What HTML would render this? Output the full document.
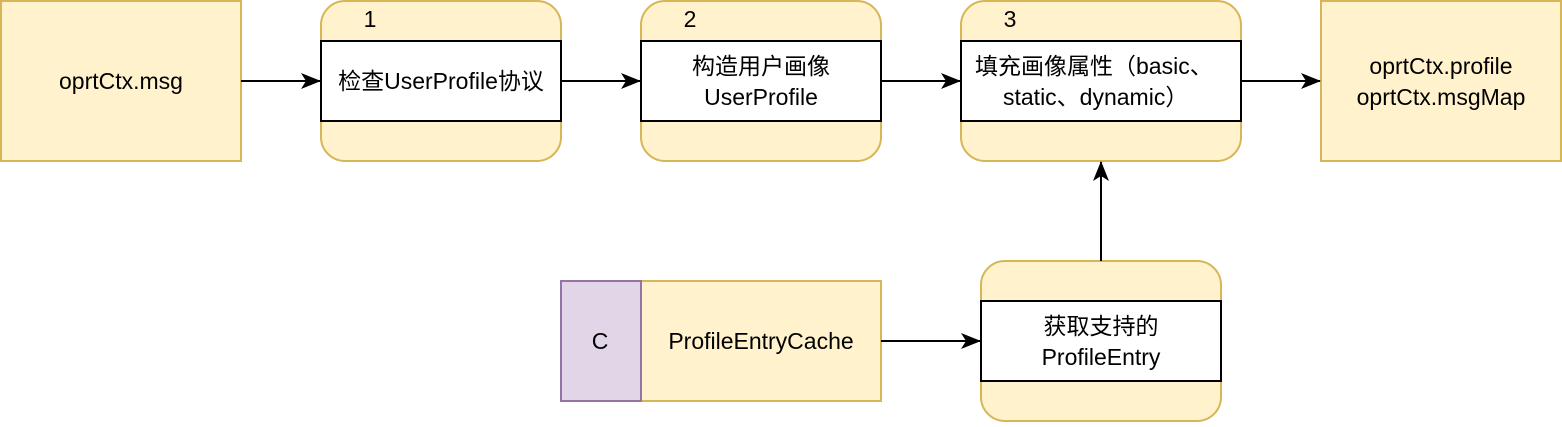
<!DOCTYPE html>
<html><head><style>body{margin:0;background:#fff}svg text{font-family:"Liberation Sans","Noto Sans CJK SC",sans-serif;font-size:23px;fill:#000}</style></head><body>
<svg width="1562" height="422" xmlns="http://www.w3.org/2000/svg">
<defs><marker id="a" markerWidth="20" markerHeight="16" refX="19" refY="8" orient="auto" markerUnits="userSpaceOnUse"><path d="M0,0 L20,8 L0,16 L5,8 Z" fill="#000"/></marker></defs>
<g fill="#fff2cc" stroke="#d6b656" stroke-width="2">
<rect x="1" y="1" width="240" height="160"/>
<rect x="321" y="1" width="240" height="160" rx="24"/>
<rect x="641" y="1" width="240" height="160" rx="24"/>
<rect x="961" y="1" width="280" height="160" rx="24"/>
<rect x="1321" y="1" width="240" height="160"/>
<rect x="641" y="281" width="240" height="120"/>
<rect x="981" y="261" width="240" height="160" rx="24"/>
</g>
<rect x="561" y="281" width="80" height="120" fill="#e1d5e7" stroke="#9673a6" stroke-width="2"/>
<g fill="#fff" stroke="#000" stroke-width="2">
<rect x="321" y="41" width="240" height="80"/>
<rect x="641" y="41" width="240" height="80"/>
<rect x="961" y="41" width="280" height="80"/>
<rect x="981" y="301" width="240" height="80"/>
</g>
<g stroke="#000" stroke-width="2" marker-end="url(#a)">
<line x1="241" y1="81" x2="320" y2="81"/>
<line x1="561" y1="81" x2="640" y2="81"/>
<line x1="881" y1="81" x2="960" y2="81"/>
<line x1="1241" y1="81" x2="1320" y2="81"/>
<line x1="881" y1="341" x2="980" y2="341"/>
<line x1="1101" y1="261" x2="1101" y2="162"/>
</g>
<g text-anchor="middle">
<text x="121" y="89">oprtCtx.msg</text>
<text x="370" y="27">1</text><text x="690" y="27">2</text><text x="1010" y="27">3</text>
<text x="441" y="89">检查UserProfile协议</text>
<text x="761" y="74">构造用户画像</text><text x="761" y="105">UserProfile</text>
<text x="1441" y="74">oprtCtx.profile</text><text x="1441" y="105">oprtCtx.msgMap</text>
<text x="600" y="349">C</text>
<text x="761" y="349">ProfileEntryCache</text>
<text x="1101" y="334">获取支持的</text><text x="1101" y="365">ProfileEntry</text>
</g>
<text x="975" y="74">填充画像属性（basic、</text><text x="1003" y="105">static、dynamic）</text>
</svg>
</body></html>
